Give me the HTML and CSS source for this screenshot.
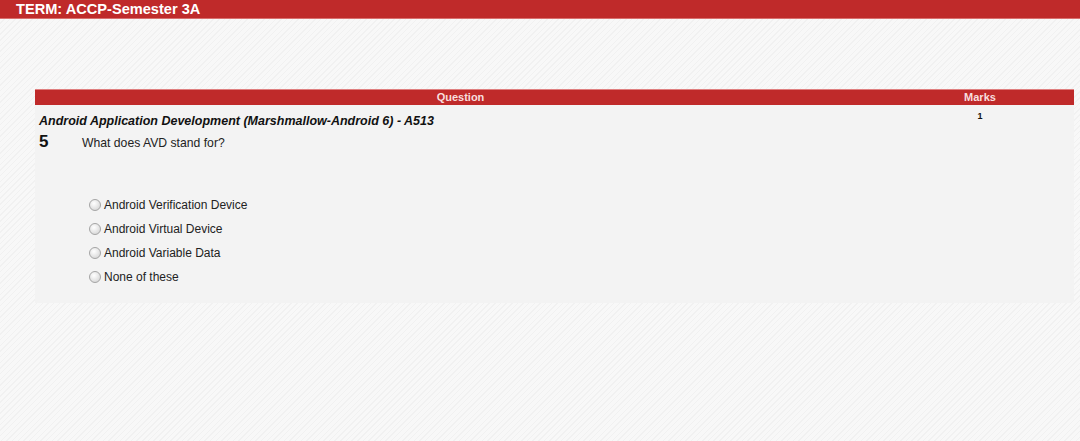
FILE: index.html
```html
<!DOCTYPE html>
<html>
<head>
<meta charset="utf-8">
<link rel="stylesheet" href="styles.css">
</head>
<body>
<div class="topbar">TERM: ACCP-Semester 3A</div>
<div class="content">
  <table class="qtable">
    <thead>
      <tr><th class="col-q">Question</th><th class="col-m">Marks</th></tr>
    </thead>
    <tbody>
      <tr>
        <td class="qcell">
          <div class="subject">Android Application Development (Marshmallow-Android 6) - A513</div>
          <div class="qline"><span class="qnum">5</span><span class="qtext">What does AVD stand for?</span></div>
          <ul class="options">
            <li><span class="radio"></span>Android Verification Device</li>
            <li><span class="radio"></span>Android Virtual Device</li>
            <li><span class="radio"></span>Android Variable Data</li>
            <li><span class="radio"></span>None of these</li>
          </ul>
        </td>
        <td class="mcell">1</td>
      </tr>
    </tbody>
  </table>
</div>
</body>
</html>
```
FILE: styles.css
```css
html, body {
  margin: 0;
  padding: 0;
}
body {
  font-family: Arial, "Liberation Sans", sans-serif;
  background-color: #f8f8f8;
  background-image: repeating-linear-gradient(135deg, #f1f1f1 0 1px, transparent 1px 4px);
  width: 1080px;
  height: 441px;
  overflow: hidden;
}
.topbar {
  background: #bf2a2a;
  color: #fff;
  font-weight: bold;
  font-size: 14.6px;
  height: 19px;
  line-height: 19px;
  padding-left: 16px;
  border-bottom: 1px solid #d9706f;
  box-sizing: border-box;
}
.content {
  padding: 70px 6px 0 35px;
}
.qtable {
  width: 1039px;
  border-collapse: collapse;
  background: #f3f3f3;
}
.qtable th {
  background: #bf2a2a;
  color: #f8dede;
  font-size: 11px;
  font-weight: bold;
  height: 15px;
  padding: 0;
  line-height: 15px;
  border-top: 1px solid #e08080;
}
.col-q { width: 851px; }
.col-m { width: 188px; }
.qcell {
  vertical-align: top;
  padding: 9px 0 14px 4px;
}
.mcell {
  vertical-align: top;
  text-align: center;
  font-size: 9px;
  font-weight: bold;
  padding-top: 6px;
  color: #111;
}
.subject {
  font-size: 12.5px;
  font-weight: bold;
  font-style: italic;
  color: #111;
  line-height: 14px;
}
.qline {
  display: flex;
  align-items: baseline;
  margin-top: 4px;
}
.qnum {
  font-size: 17px;
  font-weight: bold;
  width: 43px;
  color: #111;
}
.qtext {
  font-size: 12.2px;
  color: #222;
}
.options {
  list-style: none;
  margin: 41px 0 0 50px;
  padding: 0;
}
.options li {
  display: flex;
  align-items: center;
  font-size: 12px;
  color: #222;
  height: 24px;
}
.radio {
  width: 12px;
  height: 12px;
  border-radius: 50%;
  border: 1px solid #a5a5a5;
  background: radial-gradient(circle at 40% 35%, #ffffff, #cfcfcf);
  margin-right: 3px;
  box-sizing: border-box;
}
```
